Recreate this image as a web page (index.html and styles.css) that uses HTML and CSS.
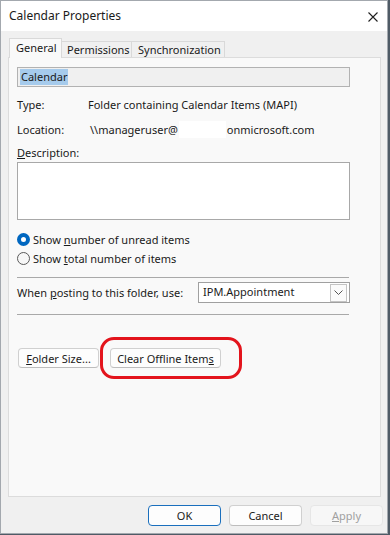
FILE: index.html
```html
<!DOCTYPE html>
<html>
<head>
<meta charset="utf-8">
<link rel="stylesheet" href="styles.css">
</head>
<body>
<div class="window">
  <div class="titlebar">
    <span class="title">Calendar Properties</span>
    <svg class="close" width="10" height="10" viewBox="0 0 10 10"><path d="M0.5 0.5L9.5 9.5M9.5 0.5L0.5 9.5" stroke="#1f1f1f" stroke-width="1.1" fill="none"/></svg>
  </div>
  <div class="content">
    <div class="tabs">
      <div class="tab active">General</div>
      <div class="tab">Permissions</div>
      <div class="tab">Synchronization</div>
    </div>
    <div class="panel">
      <div class="name-field"><span class="sel">Calendar</span></div>
      <div class="info-row"><span class="info-label">Type:</span><span class="info-value">Folder containing Calendar Items (MAPI)</span></div>
      <div class="info-row"><span class="info-label">Location:</span><span class="info-value loc">\\manageruser@<span class="redact"></span>onmicrosoft.com</span></div>
      <div class="desc-label"><u>D</u>escription:</div>
      <div class="desc-box"></div>
      <div class="radio-row first"><span class="radio checked"></span><span class="radio-text">Show <u>n</u>umber of unread items</span></div>
      <div class="radio-row"><span class="radio"></span><span class="radio-text">Show <u>t</u>otal number of items</span></div>
      <div class="sep sep1"></div>
      <div class="post-row">
        <span>When <u>p</u>osting to this folder, use:</span>
        <div class="combo">
          <span class="combo-text">IPM.Appointment</span>
          <span class="drop"><svg width="9" height="5" viewBox="0 0 9 5"><path d="M0.5 0.5L4.5 4.5L8.5 0.5" stroke="#555" stroke-width="1" fill="none"/></svg></span>
        </div>
      </div>
      <div class="sep sep2"></div>
      <div class="btn-row">
        <button class="btn folder-btn"><u>F</u>older Size...</button>
        <div class="annot-wrap">
          <button class="btn clear-btn">Clear Offline Item<u>s</u></button>
          <div class="annot"></div>
        </div>
      </div>
    </div>
    <div class="footer">
      <button class="btn dlg ok">OK</button>
      <button class="btn dlg">Cancel</button>
      <button class="btn dlg disabled"><u>A</u>pply</button>
    </div>
  </div>
</div>
</body>
</html>
```
FILE: styles.css
```css
html, body {
  margin: 0;
  padding: 0;
}
body {
  background: #4f5b66;
  width: 390px;
  height: 535px;
  overflow: hidden;
  font-family: "Noto Sans", "Open Sans", sans-serif;
  font-size: 11px;
  color: #1a1a1a;
}
.window {
  width: 388px;
  height: 534px;
  box-sizing: border-box;
  border: 1px solid #a3a8ae;
  background: #f0f0f0;
  display: flex;
  flex-direction: column;
}
.titlebar {
  height: 30px;
  background: #ffffff;
  display: flex;
  align-items: center;
  justify-content: space-between;
  padding: 0 9px 0 8px;
  flex: none;
}
.title {
  font-size: 12px;
  color: #1a1a1a;
  padding-bottom: 1px;
}
.close {
  display: block;
  margin-top: 1px;
}
.content {
  flex: 1;
  display: flex;
  flex-direction: column;
}
.tabs {
  display: flex;
  align-items: flex-end;
  height: 18px;
  margin-top: 8px;
  padding-left: 8px;
  position: relative;
  z-index: 1;
}
.tab {
  height: 16px;
  line-height: 16px;
  padding: 0 5px;
  border: 1px solid #d9d9d9;
  border-bottom: none;
  background: #f0f0f0;
  box-sizing: border-box;
  color: #1a1a1a;
}
.tab + .tab {
  border-left: none;
}
.tab:nth-child(2) { width: 70px; padding-left: 5px; }
.tab:nth-child(3) { width: 93px; padding-left: 6px; }
.tab.active {
  height: 20px;
  margin-bottom: -1px;
  background: #f9f9f9;
  width: 53px;
  line-height: 17px;
  padding-left: 6px;
  border-color: #d9d9d9;
}
.panel {
  margin-left: 7px;
  width: 373px;
  height: 440px;
  box-sizing: border-box;
  border: 1px solid #dcdcdc;
  background: #f9f9f9;
  padding: 9px 30px 0 8px;
  display: flex;
  flex-direction: column;
}
.name-field {
  height: 20px;
  box-sizing: border-box;
  border: 1px solid #b2b2b2;
  background: #f0f0f0;
  padding: 1px 2px;
  display: flex;
  align-items: stretch;
}
.sel {
  background: #a6cbec;
  line-height: 16px;
  padding: 0 1px;
  color: #1a1a1a;
}
.info-row {
  height: 25px;
  display: flex;
  align-items: center;
}
.name-field + .info-row { margin-top: 5px; }
.info-label {
  width: 71px;
  flex: none;
}
.loc {
  display: flex;
  align-items: center;
  padding-left: 2px;
}
.redact {
  display: inline-block;
  width: 47px;
  height: 17px;
  background: #ffffff;
  margin: 0 1px 0 1px;
}
.desc-label {
  margin-top: 2px;
  height: 18px;
  line-height: 18px;
}
.desc-box {
  height: 58px;
  box-sizing: border-box;
  border: 1px solid #a8a8a8;
  background: #ffffff;
}
.radio-row {
  height: 19px;
  display: flex;
  align-items: center;
}
.radio-row.first {
  margin-top: 10px;
}
.radio {
  width: 13px;
  height: 13px;
  box-sizing: border-box;
  border-radius: 50%;
  border: 1px solid #5a5a5a;
  background: #f7f7f7;
  margin-right: 3px;
  flex: none;
}
.radio.checked {
  border: 4px solid #0067c0;
  background: #ffffff;
}
.sep {
  height: 1px;
  background: #a9a9a9;
}
.sep1 { margin-top: 9px; width: 332px; }
.sep2 { margin-top: 11px; width: 332px; }
.post-row {
  margin-top: 4px;
  height: 21px;
  display: flex;
  align-items: center;
  justify-content: space-between;
}
.combo {
  width: 152px;
  height: 21px;
  box-sizing: border-box;
  border: 1px solid #a0a0a0;
  background: #ffffff;
  display: flex;
  align-items: center;
  justify-content: space-between;
  padding: 0 2px 0 4px;
}
.combo-text {
  padding-bottom: 3px;
}
.drop {
  width: 17px;
  height: 18px;
  box-sizing: border-box;
  border: 1px solid #c4c4c4;
  display: flex;
  align-items: center;
  justify-content: center;
  background: #fbfbfb;
}
.btn-row {
  margin-top: 33px;
  display: flex;
  align-items: center;
  padding-left: 1px;
}
.btn {
  font-family: "Noto Sans", "Open Sans", sans-serif;
  font-size: 11px;
  color: #1a1a1a;
  height: 20px;
  box-sizing: border-box;
  border: 1px solid #d0d0d0;
  border-bottom-color: #bdbdbd;
  border-radius: 4px;
  background: #fdfdfd;
  padding: 0 6px;
  margin: 0;
  line-height: 17px;
}
.folder-btn { width: 81px; }
.annot-wrap {
  position: relative;
  margin-left: 11px;
}
.clear-btn { width: 111px; display: block; }
.annot {
  position: absolute;
  left: -10px;
  top: -11px;
  width: 142px;
  height: 42px;
  box-sizing: border-box;
  border: 3px solid #e3141c;
  border-radius: 14px;
  pointer-events: none;
}
.footer {
  margin-top: 8px;
  display: flex;
  justify-content: flex-end;
  gap: 8px;
  padding-right: 4px;
}
.btn.dlg {
  width: 73px;
  height: 21px;
}
.btn.ok {
  border: 1px solid #1a6fbd;
}
.btn.disabled {
  background: #f7f7f7;
  border-color: #e6e6e6;
  color: #a0a0a0;
}
```
